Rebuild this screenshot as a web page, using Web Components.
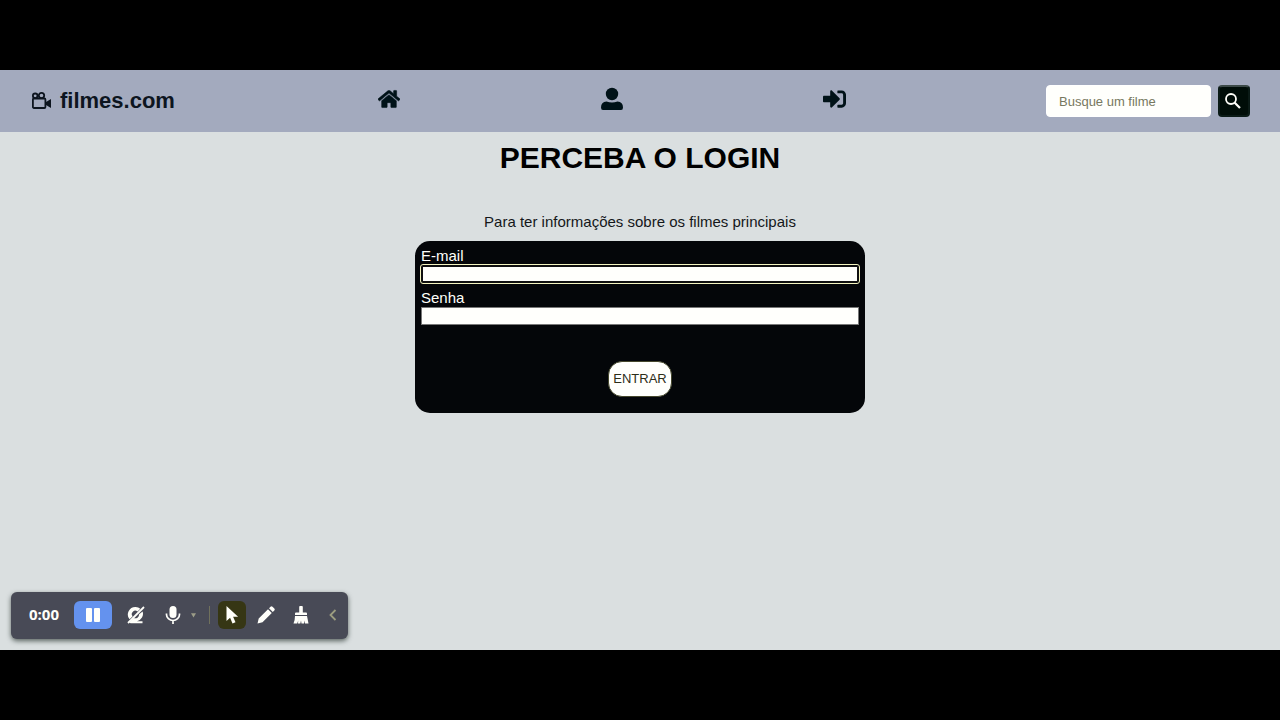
<!DOCTYPE html>
<html lang="pt-BR">
<head>
<meta charset="utf-8">
<title>filmes.com</title>
<style>
  html { height: 100%; }
  body { margin: 0; min-height: 100%; box-sizing: border-box; padding: 70px 0; background: #000; display: flex; flex-direction: column; font-family: "Liberation Sans", Arial, sans-serif; color: #000; }
</style>
</head>
<body>
<film-app></film-app>

<template id="film-app">
  <style>
    :host { flex: 1; display: flex; flex-direction: column; position: relative; background: #dadfe0; }
    main { display: flex; flex-direction: column; align-items: center; padding: 8px 16px; }
    h1 { margin: 0; font-size: 30px; line-height: 36px; text-align: center; }
    p { margin: 36px 0 10px; font-size: 15px; line-height: 19px; color: #14171a; text-align: center; }
    recorder-bar { position: absolute; left: 11px; bottom: 11px; }
  </style>
  <film-header><span slot="brand">filmes.com</span></film-header>
  <main>
    <h1>PERCEBA O LOGIN</h1>
    <p>Para ter informações sobre os filmes principais</p>
    <login-form></login-form>
  </main>
  <recorder-bar></recorder-bar>
</template>

<template id="film-header">
  <style>
    :host { display: block; background: #a3aabe; color: #001218; }
    header { display: flex; align-items: center; justify-content: space-between; padding: 15px 30px; }
    a { color: inherit; text-decoration: none; display: flex; }
    .brand { min-width: 148px; align-items: center; gap: 8px; font-size: 22px; line-height: 32px; font-weight: bold; color: #0d151f; }
    .link { padding-bottom: 4px; }
    svg { display: block; fill: currentColor; }
  </style>
  <header>
    <a class="brand" href="#">
      <svg width="22" height="22" viewBox="0 0 22 22"><g fill="none" stroke="currentColor" stroke-width="1.800"><rect x="2.900" y="8.500" width="12.500" height="9.500" rx="1"/><circle cx="5.200" cy="5.800" r="2.300"/><circle cx="11.500" cy="5.500" r="2.700"/></g><path d="M16 12l5-3v9l-5-3z"/></svg>
      <slot name="brand"></slot>
    </a>
    <a class="link" href="#" aria-label="Início"><svg width="22" height="20" viewBox="0 0 576 512"><path d="M280.400 148.300L96 300.100V464a16 16 0 0 0 16 16l112-.3a16 16 0 0 0 16-16V368a16 16 0 0 1 16-16h64a16 16 0 0 1 16 16v95.600a16 16 0 0 0 16 16.100L464 480a16 16 0 0 0 16-16V300L295.700 148.300a12.200 12.200 0 0 0-15.300 0zM571.600 251.500L488 182.600V44a12 12 0 0 0-12-12h-56a12 12 0 0 0-12 12v72.600L318.500 43a48 48 0 0 0-61 0L4.300 251.500a12 12 0 0 0-1.600 16.900l25.500 31a12 12 0 0 0 16.900 1.600l235.200-193.700a12.200 12.200 0 0 1 15.300 0L530.900 301a12 12 0 0 0 16.900-1.600l25.500-31a12 12 0 0 0-1.700-16.900z" stroke="currentColor" stroke-width="14"/></svg></a>
    <a class="link" href="#" aria-label="Perfil"><svg width="22" height="24" viewBox="0 0 22 24"><circle cx="11" cy="7" r="6.200"/><path d="M5.500 14.500q5.500 2 11 0Q22 15 22 20.500q0 2.500-2 2.500H2q-2 0-2-2.500Q0 15 5.500 14.500z"/></svg></a>
    <a class="link" href="#" aria-label="Entrar"><svg width="23" height="24" viewBox="0 0 512 512"><path d="M416 448h-84c-6.600 0-12-5.400-12-12v-40c0-6.600 5.400-12 12-12h84c17.700 0 32-14.300 32-32V160c0-17.700-14.300-32-32-32h-84c-6.600 0-12-5.400-12-12V76c0-6.600 5.400-12 12-12h84c53 0 96 43 96 96v192c0 53-43 96-96 96zm-47-209L201 71c-15-15-41-4.500-41 17v96H24c-13.300 0-24 10.700-24 24v96c0 13.300 10.700 24 24 24h136v96c0 21.500 26 32 41 17l168-168c9.300-9.400 9.300-24.600 0-34z"/></svg></a>
    <film-search></film-search>
  </header>
</template>

<template id="film-search">
  <style>
    :host { display: block; }
    form { display: flex; gap: 7px; }
    input { box-sizing: border-box; width: 165px; height: 32px; padding: 0 12px; border: 1px solid #fff; border-radius: 4px; background: #fffffc; font: 13px/16px "Liberation Sans", Arial, sans-serif; }
    input::placeholder { color: #777860; opacity: 1; }
    button { box-sizing: border-box; width: 32px; height: 32px; padding: 0; display: grid; place-items: center; border: 2px solid #0a1a16; border-top-color: #3c4a48; border-radius: 4px; background: #000d08; }
    svg { display: block; margin-right: 2px; }
  </style>
  <form>
    <input type="search" placeholder="Busque um filme" aria-label="Busque um filme">
    <button type="button" aria-label="Buscar"><svg width="18" height="18" viewBox="0 0 18 18" fill="none" stroke="#fffffa"><circle cx="7" cy="7" r="5" stroke-width="1.800"/><path d="M10.500 10.500l5.500 5.500" stroke-width="2.200"/></svg></button>
  </form>
</template>

<template id="login-form">
  <style>
    :host { display: block; width: 100%; max-width: 450px; }
    form { box-sizing: border-box; display: flex; flex-direction: column; padding: 6px 6px 16px; border-radius: 15px; background: #040609; color: #fffffa; }
    label { font-size: 15px; line-height: 18px; }
    input { box-sizing: border-box; width: 100%; height: 18px; margin: 0 0 6px; padding: 0 2px; border: 1px solid #777; background: #fffffc; font: 13px/16px "Liberation Sans", Arial, sans-serif; }
    input.active { border: 2px solid #101010; outline: 1px solid #f4f4c0; border-radius: 2px; }
    button { align-self: center; width: 64px; height: 36px; margin-top: 30px; padding: 0; border: 1px solid #45472c; border-radius: 14px; background: #fffffc; color: #2d2d18; font: 13px/16px "Liberation Sans", Arial, sans-serif; }
  </style>
  <form>
    <label for="email">E-mail</label>
    <input id="email" class="active" type="email">
    <label for="senha">Senha</label>
    <input id="senha" type="password">
    <button type="button">ENTRAR</button>
  </form>
</template>

<template id="recorder-bar">
  <style>
    :host { box-sizing: border-box; display: flex; align-items: center; width: 337px; height: 47px; padding: 0 9px 2px 18px; border-radius: 6px; background: #484a56; color: #fffffa; box-shadow: 0 2px 5px #59635f; }
    time { width: 45px; font: bold 15px/20px "Open Sans", sans-serif; padding-bottom: 2px; }
    button { flex: none; width: 28px; height: 28px; padding: 0; border: 0; border-radius: 6px; background: none; color: inherit; display: grid; place-items: center; }
    .pause { width: 38px; background: #6492ee; margin-right: 10px; }
    .mic { margin-left: 9px; }
    .more { width: 12px; color: #9c9d88; }
    .rule { width: 1px; height: 18px; margin: 0 8px 0 10px; background: #70715c; }
    .picked { background: #363614; }
    .pencil { margin: 0 7px 0 6px; }
    .fold { margin-left: auto; width: 12px; color: #9c9d80; }
    svg { display: block; fill: currentColor; }
  </style>
  <time>0:00</time>
  <button class="pause" aria-label="Pausar"><svg width="14" height="14" viewBox="0 0 14 14"><rect x="0" y="0" width="6" height="14" rx="1"/><rect x="8" y="0" width="6" height="14" rx="1"/></svg></button>
  <button aria-label="Câmera desligada"><svg width="18" height="20" viewBox="0 0 18 20"><path fill-rule="evenodd" d="M8.500 2a7 7 0 0 1 4.800 1.700L10.500 6.500a3.400 3.400 0 0 0-4.800 4.800L2.600 14.300A7.500 7.500 0 0 1 8.500 2zM15.600 6.500A7.500 7.500 0 0 1 10 16.200h5.500v2H3.500l-1.200-1L6.800 13a3.800 3.800 0 0 0 5.300-3.700z"/><path d="M1 18L17 2" stroke="currentColor" stroke-width="1.800"/></svg></button>
  <button class="mic" aria-label="Microfone"><svg width="16" height="20" viewBox="0 0 16 20"><rect x="4.500" y="1" width="7" height="12" rx="3.500"/><path d="M1.500 8.500v1a6.500 6 0 0 0 13 0v-1M8 15.500V19" fill="none" stroke="currentColor" stroke-width="1.700"/></svg></button>
  <button class="more" aria-label="Opções do microfone"><svg width="5" height="6" viewBox="0 0 6 6"><path d="M0 1h6L3 6z"/></svg></button>
  <span class="rule"></span>
  <button class="picked" aria-label="Cursor"><svg width="14" height="18" viewBox="0 0 14 18"><path d="M1.500 0v15l3.600-3.200L7.500 17.500l3-1.300-2.400-5.400h5z"/></svg></button>
  <button class="pencil" aria-label="Lápis"><svg width="18" height="18" viewBox="0 0 18 18"><path d="M0.500 17.500l1.200-5L11 3.200 14.800 7l-9.300 9.300zM12 2.200l1.500-1.500q1-.8 2 0L17.300 2.500q.9 1 0 2L15.800 6z"/></svg></button>
  <button aria-label="Limpar"><svg width="16" height="18" viewBox="0 0 16 18"><path d="M7 0h2q.8 0 .8 1v5.500h3.200q1 0 1 1V9H2V7.500q0-1 1-1h3.200V1q0-1 .8-1zM2 10h12l1.500 7.500H12l-.6-3-.4 3H8.500l-.5-3-.7 3H5l.2-3-1 3H.5q1.500-3.500 1.500-7.500z"/></svg></button>
  <button class="fold" aria-label="Recolher"><svg width="8" height="12" viewBox="0 0 8 12"><path d="M6.500 1L1.500 6l5 5" fill="none" stroke="currentColor" stroke-width="1.800"/></svg></button>
</template>

<script>
  const define = (name) => customElements.define(name, class extends HTMLElement {
    constructor() {
      super();
      this.attachShadow({ mode: "open" }).append(document.getElementById(name).content.cloneNode(true));
    }
  });
  ["film-search", "film-header", "login-form", "recorder-bar", "film-app"].forEach(define);
</script>
</body>
</html>
